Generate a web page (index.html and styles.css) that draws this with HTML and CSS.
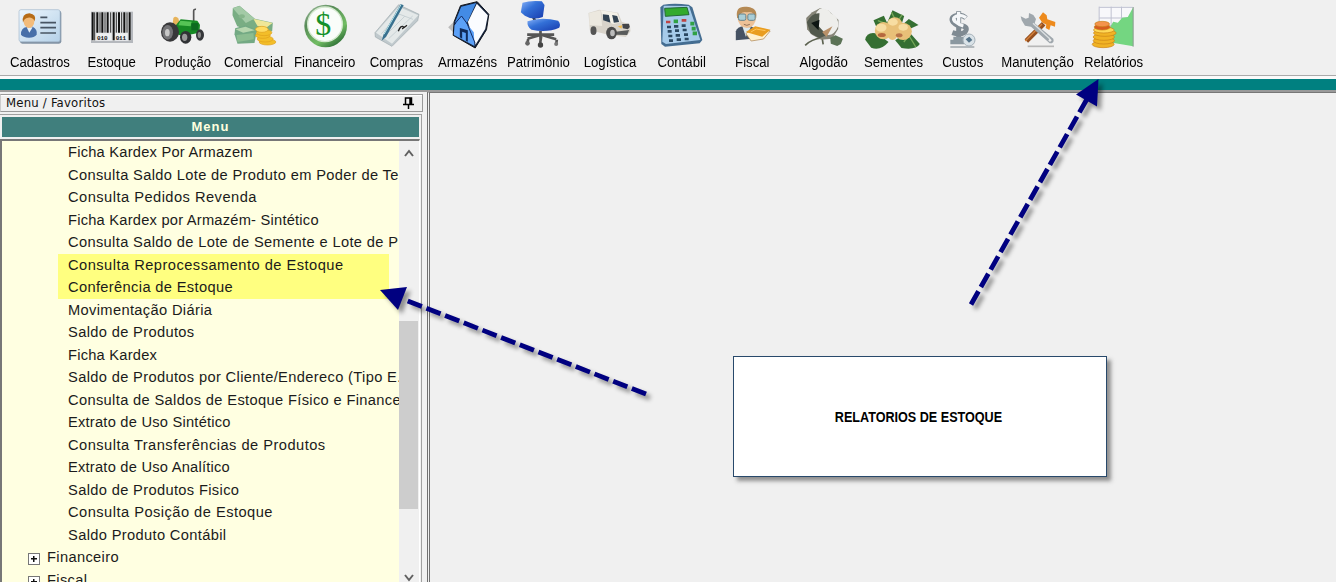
FILE: index.html
```
<!DOCTYPE html>
<html lang="pt-BR">
<head>
<meta charset="utf-8">
<title>Menu / Favoritos</title>
<link rel="stylesheet" href="styles.css">
</head>
<body>
<nav class="toolbar">
  <div class="tool"><svg viewBox="54 0 132 144">
    <defs><linearGradient id="card" x2="1" y2="1"><stop stop-color="#edf6fd"/><stop offset="1" stop-color="#b5d1e8"/></linearGradient></defs>
    <rect x="60" y="32" width="124" height="99" rx="7" fill="#8293a5"/>
    <rect x="57" y="29" width="123" height="96" rx="6" fill="url(#card)" stroke="#a4bacd" stroke-width="2"/>
    <path d="M63 104Q62 84 80 81L98 80Q113 88 110 104Q103 113 87 113Q69 112 63 104Z" fill="#476fa9"/>
    <path d="M80 82L88 98L98 82Z" fill="#e6f1fa"/>
    <ellipse cx="87" cy="64" rx="16" ry="20" fill="#f3bc7b"/><path d="M69 68Q64 41 88 40Q111 43 104 64Q98 51 84 53Q72 54 69 68" fill="#b66c18"/>
    <path d="M121 52H142M121 68H168M121 83H168M121 99H168" stroke="#485563" stroke-width="5"/></svg><span class="label">Cadastros</span></div>
  <div class="tool"><svg viewBox="267 0 132 144">
    <rect x="273" y="35" width="126" height="94" fill="#b5b8bd"/><rect x="275" y="35" width="118" height="88" fill="#dfe1e3"/>
    <path d="M278 37V121M292 37V98M307 37V98M323 37V98M341 37V121M357 37V98M373 37V98M389 37V121" stroke="#111" stroke-width="6"/>
    <path d="M284 37V121M300 37V98M315 37V98M332 37V98M349 37V98M365 37V98M381 37V98" stroke="#333" stroke-width="3"/>
    <path d="M290 100H334V121H290ZM346 100H382V121H346Z" fill="#eef0f1"/>
    <text x="291" y="119" class="bits" textLength="32">010</text><text x="347" y="119" class="bits" textLength="31">011</text></svg><span class="label">Estoque</span></div>
  <div class="tool"><svg viewBox="483 0 132 144">
    <path d="M581 66V33Q581 27 588 28" fill="none" stroke="#555" stroke-width="5"/>
    <path d="M518 72L520 54Q527 46 535 55L541 78Z" fill="#e7b35a"/>
    <path d="M525 79L542 58L592 62L600 74L598 98L550 108L529 103Z" fill="#168a24"/>
    <path d="M541 62L575 65L572 79L535 76Z" fill="#55c455"/><path d="M574 70L595 69L594 91L574 91Z" fill="#0c6a20"/>
    <ellipse cx="510" cy="96" rx="27" ry="29" fill="#38383a"/><ellipse cx="503" cy="97" rx="16" ry="22" fill="#747477"/><ellipse cx="502" cy="98" rx="7" ry="11" fill="#c8c8c8"/>
    <ellipse cx="557" cy="112" rx="17" ry="19" fill="#303235"/><ellipse cx="554" cy="112" rx="8" ry="11" fill="#999"/>
    <ellipse cx="600" cy="105" rx="12" ry="17" fill="#35373a"/><ellipse cx="598" cy="105" rx="5" ry="9" fill="#898989"/></svg><span class="label">Produção</span></div>
  <div class="tool"><svg viewBox="697.5 0 132 144">
    <path d="M700 24L720 17L766 56L820 68L818 94L774 99L713 79L699 46Z" fill="#79ad83"/>
    <path d="M700 25L720 18L765 56L739 69Z" fill="#a3caa6"/><path d="M762 57L819 69L802 82L774 78Z" fill="#efe798"/>
    <path d="M707 85L738 76L773 89L765 129L714 131L705 103Z" fill="#73a984"/><path d="M708 88L738 80L766 91L731 98Z" fill="#b6d6ae"/>
    <ellipse cx="727" cy="49" rx="9" ry="6" fill="#86b58b"/><path d="M711 105L762 99L763 118L714 126Z" fill="#8cbd91"/>
    <g fill="#f3be29" stroke="#dfa01b" stroke-width="2"><ellipse cx="804" cy="126" rx="25" ry="9"/><ellipse cx="797" cy="117" rx="24" ry="9"/><ellipse cx="790" cy="106" rx="22" ry="9"/><ellipse cx="794" cy="98" rx="23" ry="9"/><ellipse cx="787" cy="88" rx="19" ry="9" fill="#ffdc62"/></g></svg><span class="label">Comercial</span></div>
  <div class="tool"><svg viewBox="39 0 132 144">
    <defs><linearGradient id="ring" x2=".7" y2="1"><stop stop-color="#b5ccb3"/><stop offset=".35" stop-color="#568a56"/><stop offset=".75" stop-color="#72bd63"/><stop offset="1" stop-color="#2f7037"/></linearGradient></defs>
    <circle cx="107" cy="78" r="64" fill="url(#ring)"/><circle cx="105" cy="73" r="52" fill="#fafdfa" stroke="#d4e9cf" stroke-width="4"/>
    <text x="76" y="106" class="dollar">$</text></svg><span class="label">Financeiro</span></div>
  <div class="tool"><svg viewBox="252 0 132 144">
    <path d="M255 98L326 14L387 43L383 62L306 139L256 111Z" fill="#c0c9cd" stroke="#9eaaae" stroke-width="2"/>
    <path d="M258 98L326 20L385 46L306 131Z" fill="#e4e9e9"/><path d="M274 101L329 42M285 108L344 49M296 116L368 48M316 38L369 58" stroke="#b9c5ca" stroke-width="2"/>
    <path d="M325 94Q332 73 342 82Q330 92 351 76" fill="none" stroke="#222" stroke-width="4"/>
    <path d="M275 122L281 102L332 12L341 16L288 111Z" fill="#39718f"/><path d="M282 103L333 14" stroke="#b4e1e8" stroke-width="3"/></svg><span class="label">Compras</span></div>
  <div class="tool"><svg viewBox="466.5 0 132 144">
    <path d="M473 82L490 65L490 99Z" fill="#bbb"/><path d="M510 17L560 5L595 43L588 89L554 144L488 106L491 65Z" fill="#12213b" stroke="#10151f" stroke-width="3"/>
    <path d="M512 20L557 9L529 70L493 68Z" fill="#438be5"/><path d="M559 11L592 46L584 87L555 134L532 66Z" fill="#fafcff"/>
    <path d="M492 76L513 48L529 72L550 97L552 138L490 105Z" fill="#5ca1f8"/>
    <path d="M508 84L532 91V125L526 122V99L515 95V116L508 112Z" fill="#102b5b"/><path d="M492 72L513 48L530 71L554 130" fill="none" stroke="#142b62" stroke-width="3"/></svg><span class="label">Armazéns</span></div>
  <div class="tool"><svg viewBox="679.5 0 132 144">
    <defs><linearGradient id="blue" y2="1"><stop stop-color="#86b0f7"/><stop offset=".4" stop-color="#3370d7"/><stop offset="1" stop-color="#173aad"/></linearGradient></defs>
    <path d="M725 45L735 65" stroke="#333" stroke-width="8"/><path d="M696 8Q720 1 754 4L762 15L757 51Q727 62 703 47L691 37Z" fill="url(#blue)"/>
    <path d="M711 64Q750 50 803 62Q812 73 806 83Q770 99 723 89Q709 80 711 64Z" fill="url(#blue)"/>
    <path d="M750 93V119M711 116L752 104L797 118M710 104L791 104M752 110L749 129M713 118L710 133M799 119L797 133" stroke="#555" stroke-width="8" fill="none"/>
    <circle cx="711" cy="130" r="7" fill="#666"/><circle cx="750" cy="135" r="8" fill="#444"/><circle cx="797" cy="132" r="6" fill="#777"/></svg><span class="label">Patrimônio</span></div>
  <div class="tool"><svg viewBox="25.5 0 132 144">
    <path d="M27 39L59 29L116 38L127 66L151 73L153 94L139 111L90 105L31 91Z" fill="#d8d3ca"/>
    <path d="M29 39L63 31L68 78L30 75Z" fill="#ece8df"/><path d="M64 31L113 39L123 67L102 72L72 61Z" fill="#f4f1e8"/>
    <path d="M70 43L88 45L93 68L71 61ZM98 45L113 48L119 66L103 68Z" fill="#334352"/><path d="M128 72L148 71L151 81L145 88L130 85Z" fill="#434448"/>
    <path d="M108 95L149 90L143 105L109 104Z" fill="#595b5b"/><path d="M115 79L128 76L126 86Z" fill="#efb94d"/>
    <ellipse cx="42" cy="92" rx="9" ry="13" fill="#555"/><ellipse cx="96" cy="99" rx="16" ry="19" fill="#4b4b4b"/><ellipse cx="99" cy="99" rx="7" ry="10" fill="#bbb"/></svg><span class="label">Logística</span></div>
  <div class="tool"><svg viewBox="240 0 132 144">
    <path d="M253 14Q285 8 329 14L340 22L370 120L362 130L258 140L247 132L244 22Z" fill="#446d91"/><path d="M254 17L330 18L364 120L261 132L250 125Z" fill="#a6cbea"/>
    <path d="M257 25L324 22L330 44L259 49Z" fill="#33aa2d" stroke="#246937" stroke-width="3"/>
    <g class="keys"><path d="M261 66H274M308 61H322" class="red"/><path d="M284 64H297" class="green"/><path d="M264 81H276M285 79H298M308 77H320M266 94H278M288 92H300M311 90H323M268 108H280M290 106H303M315 104H327M270 122H282M293 119H306M317 117H329"/><path d="M334 71H346M338 86H350M341 100H354" class="green"/></g></svg><span class="label">Contábil</span></div>
  <div class="tool"><svg viewBox="451.5 0 132 144">
    <path d="M466 121V94Q471 81 488 79H511Q529 84 532 115Z" fill="#465263"/><path d="M486 80L496 110L511 82Z" fill="#dbe8ee"/>
    <ellipse cx="499" cy="52" rx="28" ry="32" fill="#edc197"/><path d="M470 54Q463 18 496 20Q533 22 527 53Q519 32 499 37Q479 32 475 55" fill="#b58a55"/>
    <g fill="#a9ced8" stroke="#67848c" stroke-width="3"><rect x="474" y="42" width="22" height="19" rx="5"/><rect x="502" y="42" width="22" height="19" rx="5"/></g><path d="M490 73Q499 79 508 73" fill="none" stroke="#92725a" stroke-width="3"/>
    <path d="M496 101L522 83L569 93L549 117L512 123Z" fill="#fff0ce" stroke="#a77b45" stroke-width="2"/><path d="M496 96L524 79L570 89L545 110Z" fill="#e99d20"/><path d="M511 96L527 87L555 92" fill="none" stroke="#ffc55b" stroke-width="3"/></svg><span class="label">Fiscal</span></div>
  <div class="tool"><svg viewBox="664.5 0 132 144">
    <path d="M674 136Q693 117 724 114M724 108L728 133" fill="none" stroke="#5c6250" stroke-width="5"/>
    <path d="M680 88L677 54L695 37L718 25L744 32L774 60L773 87L755 116L722 119L694 104Z" fill="#858477"/>
    <path d="M717 27Q743 23 751 40Q775 49 773 79Q762 106 742 105Q710 93 711 67Q696 44 717 27Z" fill="#eeeeeb"/>
    <path d="M679 67Q694 38 717 40L714 78L739 105L717 115L690 100Z" fill="#51584c"/><path d="M692 69L717 59L714 91Z" fill="#0e1714"/>
    <path d="M725 96L756 79L738 111Z" fill="#b99068"/><path d="M749 113L765 106L787 116L781 132L770 138L751 131Z" fill="#5b7256"/></svg><span class="label">Algodão</span></div>
  <div class="tool"><svg viewBox="4.5 0 132 144">
    <g fill="#356f32"><path d="M-13 119Q-8 93 24 101L57 126Q33 154 5 143Z"/><path d="M77 121L117 94L151 132Q139 151 96 144Z"/><path d="M50 75L69 31L104 48L94 80Z"/><path d="M12 61L43 47L59 82L24 89Z"/><path d="M98 75L118 57L147 75L120 87Z"/></g>
    <path d="M66 37L82 68L98 44M103 126L118 106L139 141M25 62L52 72" fill="none" stroke="#76a758" stroke-width="4"/>
    <g fill="#e8c078"><circle cx="76" cy="75" r="23"/><circle cx="42" cy="92" r="26"/><circle cx="101" cy="94" r="26"/><ellipse cx="69" cy="99" rx="16" ry="21"/></g>
    <g fill="#f7dda2"><ellipse cx="70" cy="66" rx="15" ry="11"/><ellipse cx="35" cy="83" rx="16" ry="12"/><ellipse cx="101" cy="82" rx="14" ry="10"/></g><ellipse cx="37" cy="105" rx="12" ry="6" fill="#b6683e"/><ellipse cx="89" cy="106" rx="10" ry="6" fill="#b87449"/></svg><span class="label">Sementes</span></div>
  <div class="tool"><svg viewBox="213 0 132 144">
    <path d="M288 54Q276 43 258 47Q239 53 250 67Q261 79 279 78Q296 83 284 97Q269 106 247 98M266 34V112" fill="none" stroke="#7f8a92" stroke-width="15"/>
    <path d="M288 53Q274 43 260 48Q245 54 254 64Q266 74 280 78M266 36V75" fill="none" stroke="#f5f7f9" stroke-width="10"/>
    <path d="M250 110H283V133H241V119H250Z" fill="#8b98a0"/><path d="M241 141H313" stroke="#b3b9bd" stroke-width="6"/>
    <circle cx="297" cy="120" r="18" fill="#dae3e8" stroke="#a5b1b9" stroke-width="3"/><path d="M287 118L298 110L307 120L297 128Z" fill="#56748a"/></svg><span class="label">Custos</span></div>
  <div class="tool"><svg viewBox="438 0 132 144">
    <path d="M473 139H552" stroke="#b7b7b7" stroke-width="5"/><path d="M469 123L521 71" stroke="#96501f" stroke-width="15"/><path d="M466 123L516 72" stroke="#d5823b" stroke-width="4"/>
    <path d="M507 53L519 37L530 46L532 58L556 66L555 80L542 76L538 90L527 84L529 74L516 67Z" fill="#ed8a1c"/>
    <path d="M455 61L452 49L467 56L476 53L477 39L490 45L498 57L494 70L550 116Q554 130 539 130L483 80L465 77Z" fill="#9fa7ad"/><path d="M489 70L540 117" stroke="#dce0e2" stroke-width="4"/><circle cx="540" cy="121" r="4" fill="#eee"/></svg><span class="label">Manutenção</span></div>
  <div class="tool"><svg viewBox="664.5 0 132 144">
    <path d="M689 20L791 20V138L689 124Z" fill="#f8f8fb"/><path d="M689 22H790M689 54H790M689 77H790M689 20V120M725 20V123M756 20V128" stroke="#bfc1d1" stroke-width="3"/>
    <path d="M716 92L731 65L745 68L758 53L775 51L791 22V139L719 127Z" fill="#74d681"/><path d="M791 21V140" stroke="#8b9b8f" stroke-width="3"/>
    <g fill="#f1b324" stroke="#c98217" stroke-width="2"><ellipse cx="701" cy="133" rx="33" ry="10"/><ellipse cx="703" cy="122" rx="32" ry="10"/><ellipse cx="703" cy="111" rx="32" ry="10"/><ellipse cx="706" cy="99" rx="34" ry="10"/><ellipse cx="703" cy="90" rx="31" ry="9" fill="#ffd957"/><ellipse cx="698" cy="81" rx="24" ry="9" fill="#d65c20"/><ellipse cx="698" cy="72" rx="22" ry="8" fill="#f4934b"/></g></svg><span class="label">Relatórios</span></div>
</nav>
<div class="teal-bar"></div>
<main class="workspace">
  <aside class="sidebar">
    <div class="dock-title"><span>Menu / Favoritos</span><svg class="pin" viewBox="0 0 11 12"><path d="M2.5 7V1H8.5V7M7 1V7M0 7.5H11M5.5 8V12" fill="none" stroke="#000" stroke-width="1.5"/></svg></div>
    <div class="panel">
      <div class="menu-title">Menu</div>
      <div class="tree-wrap">
        <div class="tree">
          <div class="row tight">Ficha Kardex Por Armazem</div>
          <div class="row">Consulta Saldo Lote de Produto em Poder de Te</div>
          <div class="row wide">Consulta Pedidos Revenda</div>
          <div class="row tight">Ficha Kardex por Armazém- Sintético</div>
          <div class="row">Consulta Saldo de Lote de Semente e Lote de P</div>
          <div class="row marked wide">Consulta Reprocessamento de Estoque</div>
          <div class="row marked">Conferência de Estoque</div>
          <div class="row">Movimentação Diária</div>
          <div class="row">Saldo de Produtos</div>
          <div class="row tight">Ficha Kardex</div>
          <div class="row">Saldo de Produtos por Cliente/Endereco (Tipo E.</div>
          <div class="row">Consulta de Saldos de Estoque Físico e Finance</div>
          <div class="row tight">Extrato de Uso Sintético</div>
          <div class="row wide">Consulta Transferências de Produtos</div>
          <div class="row tight">Extrato de Uso Analítico</div>
          <div class="row">Saldo de Produtos Fisico</div>
          <div class="row wide">Consulta Posição de Estoque</div>
          <div class="row">Saldo Produto Contábil</div>
          <div class="row parent"><i class="plus"></i>Financeiro</div>
          <div class="row parent"><i class="plus"></i>Fiscal</div>
        </div>
        <div class="scrollbar">
          <svg class="chev" viewBox="0 0 10 8"><path d="M1 7L5 2L9 7" fill="none" stroke="#606060" stroke-width="2"/></svg>
          <div class="thumb"></div>
          <svg class="chev" viewBox="0 0 10 8"><path d="M1 1L5 6L9 1" fill="none" stroke="#606060" stroke-width="2"/></svg>
        </div>
      </div>
    </div>
  </aside>
  <section class="canvas"><div class="note"><span>RELATORIOS DE ESTOQUE</span></div></section>
</main>
<svg class="arrows" viewBox="0 0 1336 582">
  <g fill="#000080" stroke="none">
    <path d="M380 290L407 287L398 310Z"/><path d="M1098.500 79L1076 94.500L1097 106.500Z"/>
  </g>
  <g fill="none" stroke="#000080" stroke-width="4.800">
    <path d="M646 394L404 299.500" stroke-dasharray="15.200 4.850"/><path d="M971 304.500L1087 99" stroke-dasharray="15.200 4.850"/>
  </g>
</svg>
</body>
</html>
```
FILE: styles.css
```
* { box-sizing: border-box; }
body { margin: 0; width: 1336px; height: 582px; overflow: hidden; background: #f0f0f0; color: #111; font-family: "Liberation Sans", Arial, sans-serif; display: flex; flex-direction: column; position: relative; }
.toolbar { height: 79px; flex: none; display: grid; grid-template-columns: repeat(12, 71.25px) 68px 71px 79px 72px; padding-left: 4.400px; border-bottom: 3px solid #fafafa; box-shadow: inset 0 -1px #aaa; }
.tool { display: flex; flex-direction: column; align-items: center; }
.tool > svg { width: 44px; height: 48px; overflow: visible; flex: none; }
.label { font-size: 14px; line-height: 16px; margin-top: 6px; white-space: nowrap; color: #000; transform: scaleX(.94); }
.bits { font: bold 18px "Liberation Mono", monospace; fill: #111; }
.dollar { font: 96px "Liberation Serif", serif; fill: #14912a; }
.keys { stroke: #2b4862; stroke-width: 8px; }
.keys .red { stroke: #be4545; }
.keys .green { stroke: #30a145; stroke-width: 11px; }
.teal-bar { height: 11px; flex: none; background: #008080; }
.workspace { flex: 1; min-height: 0; display: grid; grid-template-columns: 427px 1fr; border-top: 2px solid #9a9a9a; }
.sidebar { min-height: 0; padding-top: 2px; display: flex; flex-direction: column; }
.dock-title { width: 423px; height: 18px; flex: none; border: 1px solid #999; border-left-color: #ccc; box-shadow: inset 0 1px #fff; display: flex; align-items: center; justify-content: space-between; padding: 0 8px 0 5px; font: 13px/16px "DejaVu Sans Condensed", "DejaVu Sans", sans-serif; letter-spacing: .2px; }
.pin { width: 11px; height: 12px; }
.panel { flex: 1; min-height: 0; width: 422px; margin-top: 2px; border-top: 1px solid #a0a0a0; border-right: 1px solid #a0a0a0; padding: 2px 1px 0 0; display: flex; flex-direction: column; }
.menu-title { height: 20px; flex: none; margin: 0 1px 0 2px; background: #407f7d; color: #ffffdf; text-align: center; font-size: 13px; font-weight: bold; line-height: 20px; letter-spacing: 1px; }
.tree-wrap { margin-top: 2px; flex: 1; min-height: 0; border-top: 2px solid #777; border-left: 2px solid #777; display: flex; border-right: 1px solid #fff; }
.tree { width: 397px; overflow: hidden; background: #ffffe1; }
.row { height: 22.500px; padding-left: 66px; font-size: 14.670px; line-height: 22px; white-space: nowrap; letter-spacing: .350px; color: #1b1b1b; }
.tight { letter-spacing: .230px; }
.wide { letter-spacing: .470px; }
.marked { margin-left: 56px; padding-left: 10px; width: 331px; background: #ffff80; }
.parent { padding-left: 26px; display: flex; align-items: center; gap: 7px; }
.plus { width: 12px; height: 12px; margin-top: 4px; border: 1px solid #777; background: linear-gradient(#111, #111) 2px 4px / 6px 1.500px no-repeat, linear-gradient(#111, #111) 4px 2px / 1.500px 6px no-repeat, #fff; }
.scrollbar { width: 20px; padding-right: 1px; display: flex; flex-direction: column; align-items: center; background: #f0f0f0; }
.chev { width: 10px; height: 8px; margin-top: 8px; flex: none; }
.thumb { width: 19px; height: 188px; margin: 164px 0 57px; background: #cdcdcd; flex: none; }
.canvas { border-left: 3px double #707070; border-top: 1px solid #777; padding: 263px 0 0 303px; }
.note { width: 374px; height: 121px; background: #fff; border: 1px solid #28496b; box-shadow: 4px 4px 4px #777c; display: flex; align-items: center; justify-content: center; font-size: 14px; font-weight: bold; color: #000; }
.note span { transform: translateX(-1.500px) scaleX(.9); white-space: nowrap; }
.arrows { position: absolute; inset: 0; width: 1336px; height: 582px; filter: drop-shadow(4px 4px 2px #0006); pointer-events: none; }
```
